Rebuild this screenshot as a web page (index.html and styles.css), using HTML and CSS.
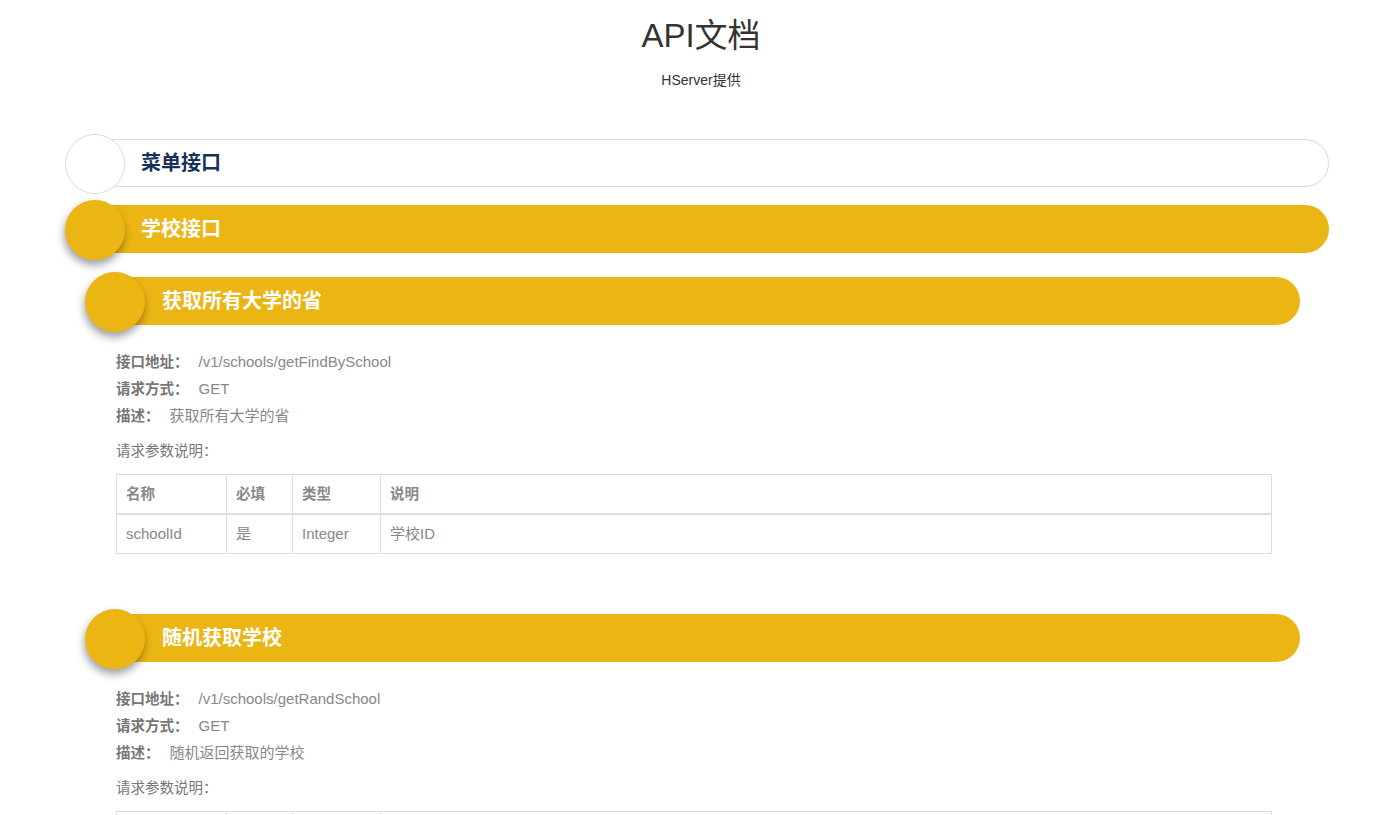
FILE: index.html
```html
<!DOCTYPE html>
<html lang="zh-CN">
<head>
<meta charset="utf-8">
<title>API文档</title>
<link rel="stylesheet" href="styles.css">
</head>
<body>
<header class="head">
  <h1 class="title">API文档</h1>
  <p class="subtitle">HServer提供</p>
</header>
<main class="main">
  <div class="row row-top row-menu">
    <span class="dot dot-plain"></span>
    <div class="bar bar-plain"><span class="bar-text navy">菜单接口</span></div>
  </div>
  <div class="row row-top">
    <span class="dot dot-yellow"></span>
    <div class="bar bar-yellow"><span class="bar-text">学校接口</span></div>
  </div>

  <section class="api">
    <div class="row row-sub">
      <span class="dot dot-yellow"></span>
      <div class="bar bar-yellow"><span class="bar-text">获取所有大学的省</span></div>
    </div>
    <div class="detail">
      <p class="line"><b class="lbl">接口地址：</b>/v1/schools/getFindBySchool</p>
      <p class="line"><b class="lbl">请求方式：</b>GET</p>
      <p class="line"><b class="lbl">描述：</b>获取所有大学的省</p>
      <p class="params">请求参数说明：</p>
      <table class="tbl">
        <thead>
          <tr><th class="c1">名称</th><th class="c2">必填</th><th class="c3">类型</th><th>说明</th></tr>
        </thead>
        <tbody>
          <tr><td>schoolId</td><td>是</td><td>Integer</td><td>学校ID</td></tr>
        </tbody>
      </table>
    </div>
  </section>

  <section class="api">
    <div class="row row-sub">
      <span class="dot dot-yellow"></span>
      <div class="bar bar-yellow"><span class="bar-text">随机获取学校</span></div>
    </div>
    <div class="detail">
      <p class="line"><b class="lbl">接口地址：</b>/v1/schools/getRandSchool</p>
      <p class="line"><b class="lbl">请求方式：</b>GET</p>
      <p class="line"><b class="lbl">描述：</b>随机返回获取的学校</p>
      <p class="params">请求参数说明：</p>
      <table class="tbl">
        <thead>
          <tr><th class="c1">名称</th><th class="c2">必填</th><th class="c3">类型</th><th>说明</th></tr>
        </thead>
        <tbody>
          <tr><td>无</td><td>否</td><td>-</td><td>-</td></tr>
        </tbody>
      </table>
    </div>
  </section>
</main>
</body>
</html>
```

FILE: styles.css
```css
* { box-sizing: border-box; }
html, body { margin: 0; padding: 0; background: #fff; }
body {
  font-family: "Liberation Sans", Arial, "Noto Sans CJK SC", sans-serif;
  font-size: 14px;
  color: #333;
}
.head {
  padding: 16px 0 0 23px;
  text-align: center;
}
.title {
  margin: 0;
  font-size: 33px;
  line-height: 40px;
  font-weight: normal;
  color: #333;
}
.subtitle {
  margin: 14px 0 0;
  font-size: 14px;
  line-height: 20px;
  color: #333;
}
.main {
  padding: 44px 50px 40px 65px;
}
.row {
  display: flex;
  align-items: center;
  height: 60px;
}
.row-top + .row-top { margin-top: 6px; }
.row-sub { margin: 12px 29px 0 20px; }
.dot {
  flex: none;
  width: 60px;
  height: 60px;
  border-radius: 50%;
  margin-right: -30px;
  position: relative;
  z-index: 1;
}
.dot-plain {
  background: #fff;
  border: 1px solid #dcdcdc;
}
.dot-yellow {
  background: #ebb613;
  box-shadow: -1px 5px 9px rgba(0,0,0,0.38);
}
.bar {
  flex: 1;
  height: 48px;
  margin-bottom: 2px;
  border-radius: 0 24px 24px 0;
  display: flex;
  align-items: center;
  padding-left: 46px;
  padding-bottom: 1px;
}
.row-sub .bar { padding-left: 47px; }
.bar-plain {
  border: 1px solid #dcdcdc;
  border-left: none;
}
.bar-yellow { background: #ebb613; }
.bar-text {
  font-size: 20px;
  line-height: 24px;
  font-weight: bold;
  color: #fff;
}
.bar-text.navy { color: #15325a; }
.detail {
  padding: 16px 0 0 51px;
  margin-right: 57px;
  font-size: 15px;
}
.line {
  margin: 0;
  height: 27px;
  line-height: 27px;
  color: #888;
}
.lbl {
  color: #777;
  font-size: 14.5px;
  margin-right: 10px;
}
.params {
  margin: 12px 0 13px;
  line-height: 20px;
  font-size: 14.5px;
  color: #777;
}
.tbl {
  width: 100%;
  border-collapse: collapse;
  color: #888;
}
.tbl th, .tbl td {
  border: 1px solid #ddd;
  padding: 8px 9px;
  line-height: 22px;
  text-align: left;
}
.tbl th {
  font-weight: bold;
  font-size: 14.5px;
  color: #888;
  border-bottom-width: 2px;
}
.tbl .c1 { width: 110px; }
.tbl .c2 { width: 66px; }
.tbl .c3 { width: 88px; }
.api + .api { margin-top: 55px; }
```
